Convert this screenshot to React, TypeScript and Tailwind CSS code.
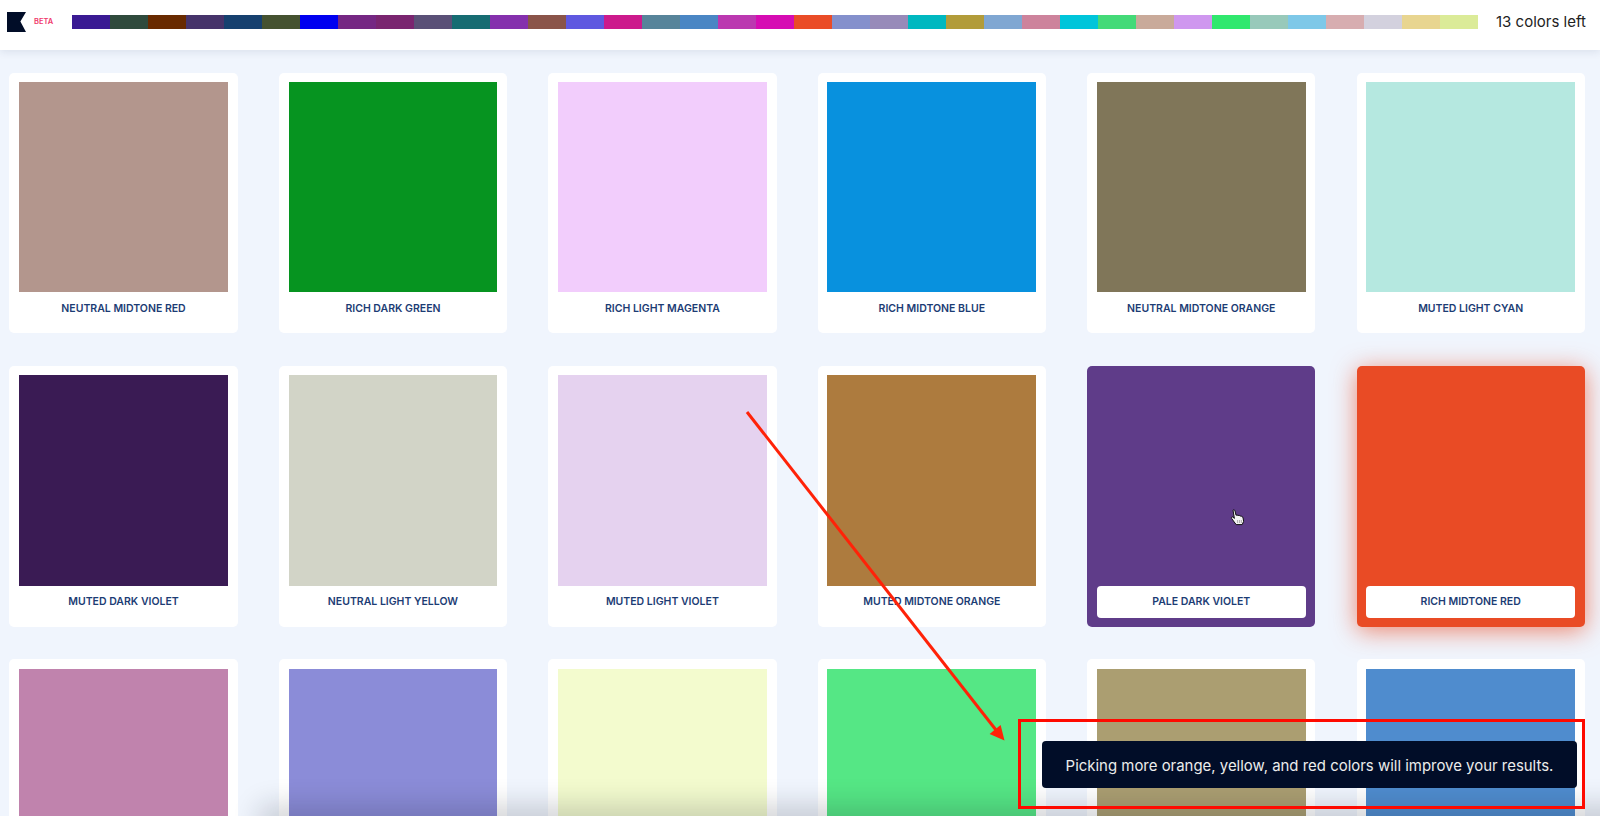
const strip = [
  "bg-[#3a1a93]", "bg-[#2f4a3c]", "bg-[#682a00]", "bg-[#46336a]", "bg-[#16406f]", "bg-[#455230]", "bg-[#0000f0]", "bg-[#752783]",
  "bg-[#7a2570]", "bg-[#5a5077]", "bg-[#166c72]", "bg-[#8530ad]", "bg-[#8a5449]", "bg-[#5f58e0]", "bg-[#cc1a8c]", "bg-[#57849a]",
  "bg-[#4a86c4]", "bg-[#bb38b0]", "bg-[#d60cb3]", "bg-[#ea4c27]", "bg-[#8490cc]", "bg-[#978ab9]", "bg-[#00b8c0]", "bg-[#b29c3a]",
  "bg-[#80a7d2]", "bg-[#cd839c]", "bg-[#00c5da]", "bg-[#44da78]", "bg-[#c9aa9a]", "bg-[#cf97ef]", "bg-[#30e86e]", "bg-[#98c9ba]",
  "bg-[#7ec8e8]", "bg-[#d7adb0]", "bg-[#d3d1de]", "bg-[#e8d590]", "bg-[#dbeb98]",
];

type Card = { name?: string; color: string; hover?: string };

const cards: Card[] = [
  { name: "NEUTRAL MIDTONE RED", color: "bg-[#b3968d]" },
  { name: "RICH DARK GREEN", color: "bg-[#069420]" },
  { name: "RICH LIGHT MAGENTA", color: "bg-[#f2cdfc]" },
  { name: "RICH MIDTONE BLUE", color: "bg-[#0891de]" },
  { name: "NEUTRAL MIDTONE ORANGE", color: "bg-[#807659]" },
  { name: "MUTED LIGHT CYAN", color: "bg-[#b5e8e0]" },
  { name: "MUTED DARK VIOLET", color: "bg-[#3a1b54]" },
  { name: "NEUTRAL LIGHT YELLOW", color: "bg-[#d2d4c7]" },
  { name: "MUTED LIGHT VIOLET", color: "bg-[#e5d2ef]" },
  { name: "MUTED MIDTONE ORANGE", color: "bg-[#ad7b3e]" },
  { name: "PALE DARK VIOLET", color: "bg-[#5f3c89]", hover: "bg-[#5f3c89]" },
  { name: "RICH MIDTONE RED", color: "bg-[#e94b25]", hover: "bg-[#e94b25] shadow-[0_4px_24px_rgba(233,75,37,0.65)]" },
  { color: "bg-[#c083ad]" },
  { color: "bg-[#8b8cd8]" },
  { color: "bg-[#f3fbce]" },
  { color: "bg-[#55e785]" },
  { color: "bg-[#ab9e71]" },
  { color: "bg-[#4f8cce]" },
];

function ColorCard({ card }: { card: Card }) {
  return (
    <div className={`h-[260.6px] rounded-[5px] px-[9.8px] pt-[9.4px] ${card.hover ?? "bg-white"}`}>
      <div className={`h-[210.4px] ${card.color}`} />
      {card.name &&
        (card.hover ? (
          <div className="flex h-[32px] items-center justify-center rounded-[4px] bg-white pt-[1px] text-center text-[10.5px] font-semibold text-[#1c3c74]">
            {card.name}
          </div>
        ) : (
          <div className="flex h-[33px] items-center justify-center text-center text-[10.5px] font-semibold text-[#1c3c74]">
            {card.name}
          </div>
        ))}
    </div>
  );
}

export default function App() {
  return (
    <div className="relative h-[816px] w-full overflow-hidden bg-[#f0f5fd] font-['Inter','Liberation_Sans',sans-serif]">
      <header className="relative z-10 flex h-[50px] items-center bg-white pb-[6px] pl-[7px] pr-[14px] shadow-[0_2px_8px_rgba(30,50,90,0.1)]">
        <svg width="19" height="20" viewBox="0 0 19 20" className="shrink-0">
          <path d="M0 0H19L13.4 9.5L19 20H0Z" fill="#010d28" />
        </svg>
        <span className="ml-[8px] w-[38px] shrink-0 text-[7.5px] font-semibold text-[#f0386b]">BETA</span>
        <div className="flex h-[14.5px] w-[1406px] shrink-0">
          {strip.map((c, i) => (
            <div key={i} className={`flex-1 ${c}`} />
          ))}
        </div>
        <span className="ml-[18px] whitespace-nowrap text-[15px] text-[#222222]">13 colors left</span>
      </header>

      <main className="grid grid-cols-6 gap-x-[41.2px] gap-y-[32.8px] pl-[9.4px] pr-[15.2px] pt-[22.7px]">
        {cards.map((c, i) => (
          <ColorCard key={i} card={c} />
        ))}
      </main>

      <div className="absolute bottom-[-12px] left-[270px] right-[-40px] h-[12px] shadow-[0_0_28px_10px_rgba(20,25,40,0.2)]" />

      <svg width="15" height="17" viewBox="0 0 15 17" className="absolute left-[1230px] top-[509px]">
        <path
          d="M3 1.2C3.8 .6 4.8 1 5 2L6 6.2L7 6L8 6.4L9.2 6.4L10.2 7L11.4 7.2L13 8.4L13.6 12.4L12.2 15.6H6.2L4.2 13L1.6 9.4C1 8.4 2 7.4 3 8.2L4.4 9.4Z"
          fill="#f4f4f4"
          stroke="#111"
          strokeWidth="1"
          strokeLinejoin="round"
        />
        <path d="M7.6 11V14M9.6 11V14M11.4 11V14" stroke="#999" strokeWidth="0.8" />
      </svg>

      <div className="absolute left-[1042px] top-[741px] flex h-[47px] w-[535px] items-center justify-center rounded-[4px] bg-[#010d28] pt-[3px] text-[14.95px] text-[#ececec]">
        Picking more orange, yellow, and red colors will improve your results.
      </div>

      <div className="absolute left-[1018px] top-[719px] h-[90px] w-[567px] border-[3px] border-[#ff0a00]" />

      <svg width="1600" height="816" viewBox="0 0 1600 816" className="pointer-events-none absolute left-0 top-0">
        <line x1="747" y1="412" x2="996" y2="730" stroke="#ff2208" strokeWidth="3" />
        <polygon points="1004.5,740.5 989.6,734 1000.6,725" fill="#ff2208" />
      </svg>
    </div>
  );
}
